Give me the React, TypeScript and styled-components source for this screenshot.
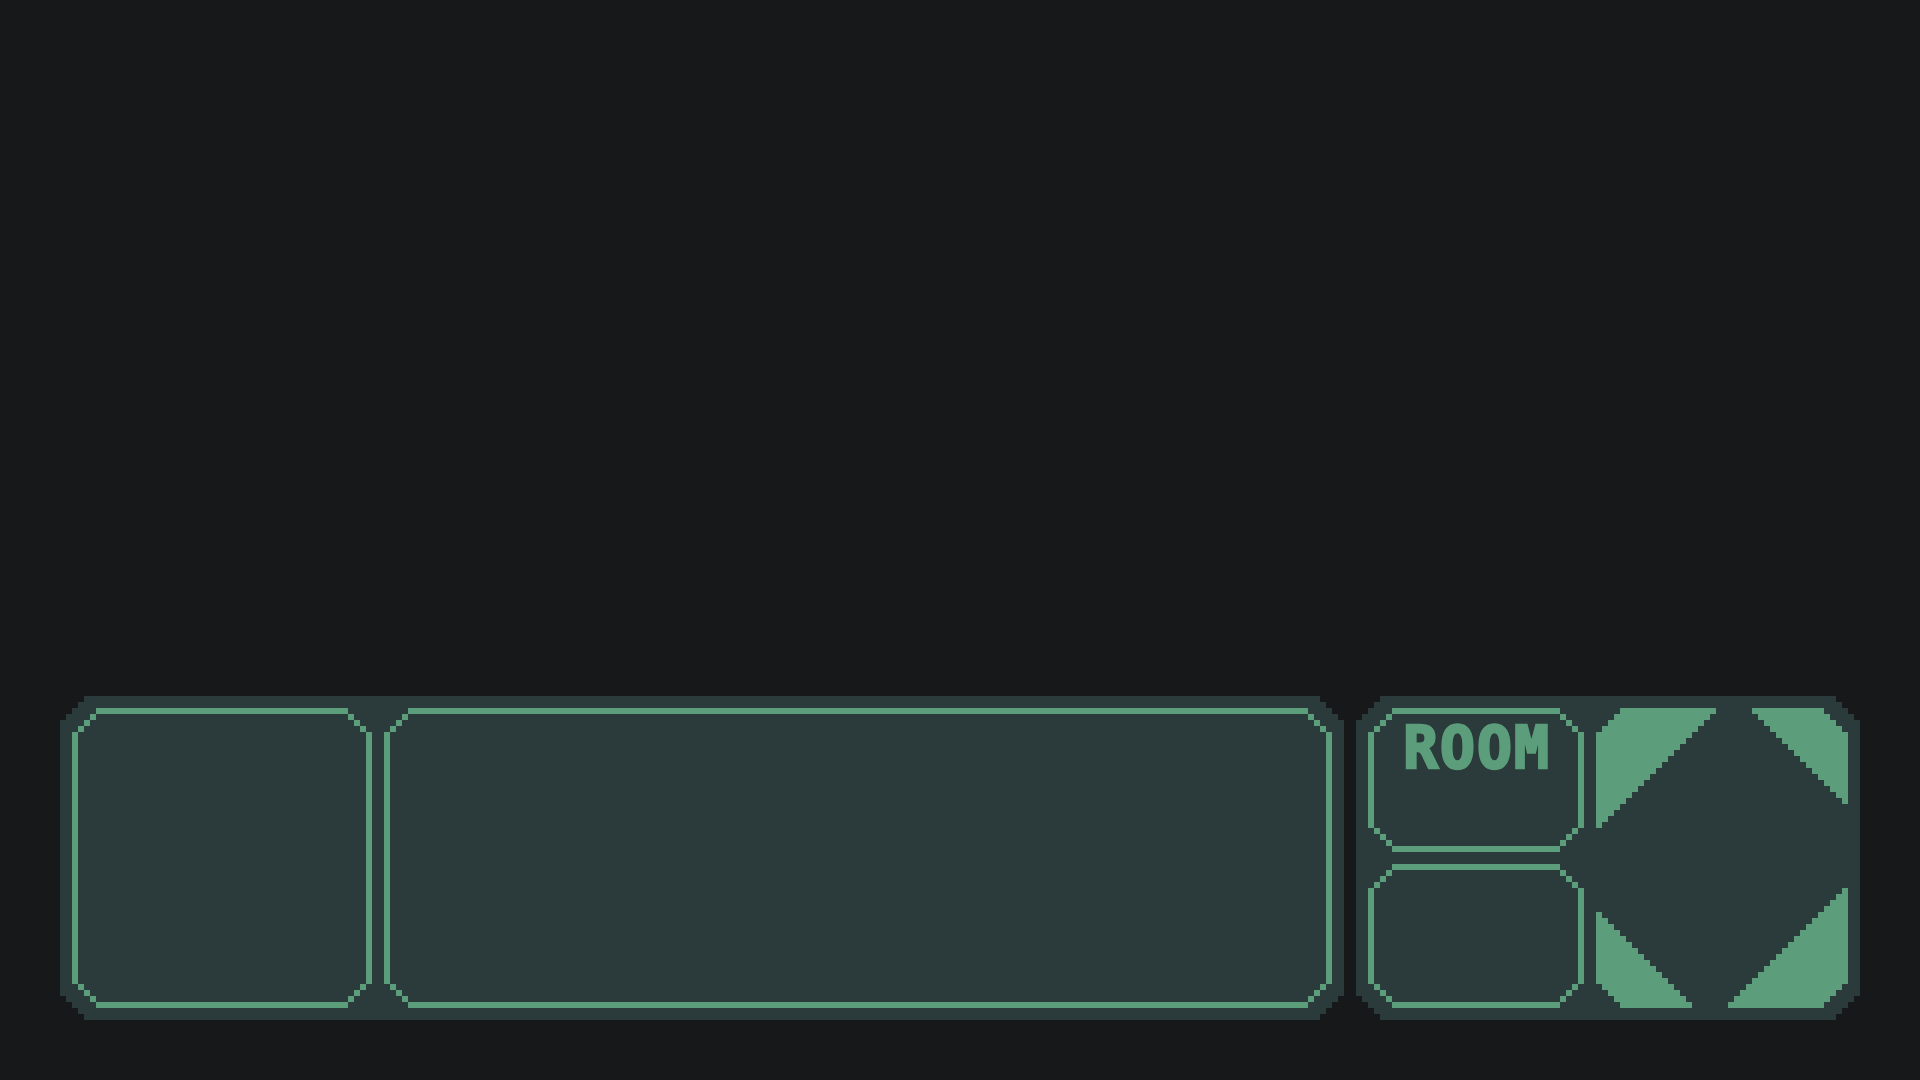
import React from "react";
import styled, { createGlobalStyle } from "styled-components";

const BG = "#17181a";
const PANEL = "#2b3a3a";
const GREEN = "#5c9e7b";
const U = 6;

type Pt = [string, string];
const L = (v: number) => `${v}px`;
const R = (v: number) => (v === 0 ? "100%" : `calc(100% - ${v}px)`);

function stepped(n: number, u: number = U): string {
  const pts: Pt[] = [];
  pts.push([L(0), L(n * u)]);
  for (let k = 1; k <= n; k++) {
    pts.push([L(k * u), L((n - k + 1) * u)]);
    pts.push([L(k * u), L((n - k) * u)]);
  }
  for (let k = n; k >= 1; k--) {
    pts.push([R(k * u), L((n - k) * u)]);
    pts.push([R(k * u), L((n - k + 1) * u)]);
  }
  pts.push([R(0), L(n * u)]);
  pts.push([R(0), R(n * u)]);
  for (let k = 1; k <= n; k++) {
    pts.push([R(k * u), R((n - k + 1) * u)]);
    pts.push([R(k * u), R((n - k) * u)]);
  }
  for (let k = n; k >= 1; k--) {
    pts.push([L(k * u), R((n - k) * u)]);
    pts.push([L(k * u), R((n - k + 1) * u)]);
  }
  pts.push([L(0), R(n * u)]);
  return `polygon(${pts.map((p) => p.join(" ")).join(", ")})`;
}

const OUTER_CLIP = stepped(4);
const INNER_CLIP = stepped(3);

const GlobalStyle = createGlobalStyle`
  html, body {
    margin: 0;
    padding: 0;
    background: ${BG};
  }
  body {
    font-family: "DejaVu Sans Mono", "Liberation Mono", monospace;
  }
`;

const Screen = styled.div`
  width: 100%;
  min-height: 100vh;
  box-sizing: border-box;
  display: flex;
  flex-direction: column;
  justify-content: flex-end;
  padding: 0 60px 60px;
  background: ${BG};
`;

const Hud = styled.div`
  display: flex;
  gap: 12px;
  height: 324px;
`;

const Panel = styled.div<{ $width?: number }>`
  ${(p) => (p.$width ? `width: ${p.$width}px; flex: none;` : "flex: 1;")}
  box-sizing: border-box;
  height: 100%;
  background: ${PANEL};
  clip-path: ${OUTER_CLIP};
  padding: 12px;
  display: flex;
  gap: 12px;
`;

const Frame = styled.div<{ $width?: number; $height?: number }>`
  ${(p) => (p.$width ? `width: ${p.$width}px; flex: none;` : "flex: 1;")}
  height: ${(p) => (p.$height ? `${p.$height}px` : "100%")};
  box-sizing: border-box;
  background: ${GREEN};
  clip-path: ${OUTER_CLIP};
  padding: 6px;
  display: flex;
`;

const FrameInner = styled.div`
  flex: 1;
  background: ${PANEL};
  clip-path: ${INNER_CLIP};
  display: flex;
  flex-direction: column;
  align-items: center;
`;

const Column = styled.div`
  display: flex;
  flex-direction: column;
  gap: 12px;
  width: 216px;
`;

const Label = styled.div`
  margin-top: 5px;
  padding-left: 2px;
  font-family: "DejaVu Sans Mono", "Liberation Mono", monospace;
  font-weight: bold;
  font-size: 58px;
  line-height: 58px;
  letter-spacing: 2px;
  color: ${GREEN};
  -webkit-text-stroke: 2.5px ${GREEN};
`;

const Compass = styled.svg`
  display: block;
  flex: none;
`;

const cut = (k: number) => (k < 4 ? (4 - k) * U : 0);

function compassRects() {
  const rects: { x: number; y: number; w: number }[] = [];
  // top-left: legs 20 units
  for (let k = 0; k < 20; k++) {
    const x0 = cut(k);
    const x1 = 120 - 6 * k;
    rects.push({ x: x0, y: 6 * k, w: x1 - x0 });
  }
  // top-right: legs 16 units
  for (let k = 0; k < 16; k++) {
    const x0 = 156 + 6 * k;
    const x1 = 252 - cut(k);
    rects.push({ x: x0, y: 6 * k, w: x1 - x0 });
  }
  // bottom-right: legs 20 units
  for (let j = 0; j < 20; j++) {
    const x0 = 132 + 6 * j;
    const x1 = 252 - cut(j);
    rects.push({ x: x0, y: 294 - 6 * j, w: x1 - x0 });
  }
  // bottom-left: legs 16 units
  for (let j = 0; j < 16; j++) {
    const x0 = cut(j);
    const x1 = 96 - 6 * j;
    rects.push({ x: x0, y: 294 - 6 * j, w: x1 - x0 });
  }
  return rects;
}

const RECTS = compassRects();

export default function App() {
  return (
    <>
      <GlobalStyle />
      <Screen>
        <Hud>
          <Panel>
            <Frame $width={300}>
              <FrameInner />
            </Frame>
            <Frame>
              <FrameInner />
            </Frame>
          </Panel>
          <Panel $width={504}>
            <Column>
              <Frame $height={144}>
                <FrameInner>
                  <Label>ROOM</Label>
                </FrameInner>
              </Frame>
              <Frame $height={144}>
                <FrameInner />
              </Frame>
            </Column>
            <Compass width={252} height={300} viewBox="0 0 252 300" shapeRendering="crispEdges">
              {RECTS.map((r, i) => (
                <rect key={i} x={r.x} y={r.y} width={r.w} height={6} fill={GREEN} />
              ))}
            </Compass>
          </Panel>
        </Hud>
      </Screen>
    </>
  );
}
